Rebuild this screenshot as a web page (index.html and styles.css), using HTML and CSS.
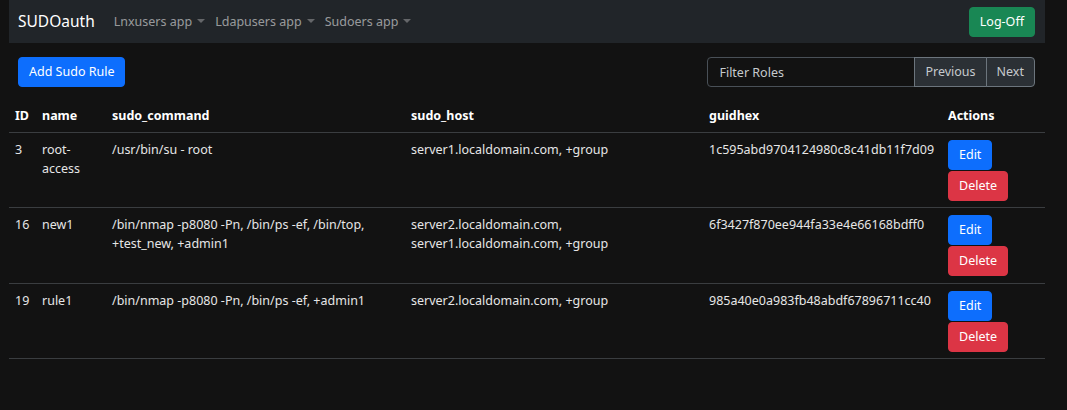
FILE: index.html
```html
<!DOCTYPE html>
<html lang="en">
<head>
<meta charset="utf-8">
<title>SUDOauth</title>
<link rel="stylesheet" href="styles.css">
</head>
<body>
<div class="page">
  <nav class="navbar">
    <a class="brand" href="#">SUDOauth</a>
    <ul class="nav-links">
      <li class="dropdown">Lnxusers app</li>
      <li class="dropdown">Ldapusers app</li>
      <li class="dropdown">Sudoers app</li>
    </ul>
    <button class="btn btn-success">Log-Off</button>
  </nav>

  <div class="toolbar">
    <button class="btn btn-primary">Add Sudo Rule</button>
    <div class="search-group">
      <input class="filter" type="text" placeholder="Filter Roles">
      <button class="btn btn-page">Previous</button>
      <button class="btn btn-page btn-last">Next</button>
    </div>
  </div>

  <table class="rules">
    <colgroup>
      <col class="c-id"><col class="c-name"><col class="c-cmd"><col class="c-host"><col class="c-guid"><col class="c-act">
    </colgroup>
    <thead>
      <tr><th>ID</th><th>name</th><th>sudo_command</th><th>sudo_host</th><th>guidhex</th><th>Actions</th></tr>
    </thead>
    <tbody>
      <tr>
        <td>3</td><td>root-<br>access</td><td>/usr/bin/su - root</td><td>server1.localdomain.com, +group</td><td>1c595abd9704124980c8c41db11f7d09</td>
        <td class="actions"><button class="btn btn-primary">Edit</button><button class="btn btn-danger">Delete</button></td>
      </tr>
      <tr>
        <td>16</td><td>new1</td><td>/bin/nmap -p8080 -Pn, /bin/ps -ef, /bin/top, +test_new, +admin1</td><td>server2.localdomain.com, server1.localdomain.com, +group</td><td>6f3427f870ee944fa33e4e66168bdff0</td>
        <td class="actions"><button class="btn btn-primary">Edit</button><button class="btn btn-danger">Delete</button></td>
      </tr>
      <tr>
        <td>19</td><td>rule1</td><td>/bin/nmap -p8080 -Pn, /bin/ps -ef, +admin1</td><td>server2.localdomain.com, +group</td><td>985a40e0a983fb48abdf67896711cc40</td>
        <td class="actions"><button class="btn btn-primary">Edit</button><button class="btn btn-danger">Delete</button></td>
      </tr>
    </tbody>
  </table>
</div>
</body>
</html>
```

FILE: styles.css
```css
* { box-sizing: border-box; }

html, body {
  margin: 0;
  background: #121212;
  color: #dee2e6;
  font-family: "Noto Sans", "Open Sans", sans-serif;
  font-size: 12.5px;
  line-height: 19.5px;
}

.page {
  width: 1036px;
  margin-left: 9px;
}

.navbar {
  display: flex;
  align-items: center;
  height: 43px;
  background: #212529;
  padding: 0 10px 0 9px;
}

.brand {
  color: #fff;
  text-decoration: none;
  font-size: 15.5px;
  margin-right: 14px;
}

.nav-links {
  display: flex;
  list-style: none;
  margin: 0;
  padding: 0;
  flex: 1;
}

.dropdown {
  color: rgba(255, 255, 255, 0.55);
  padding: 0 5px;
}

.dropdown::after {
  content: "";
  display: inline-block;
  margin-left: 5px;
  vertical-align: 3px;
  border-top: 4px solid rgba(255, 255, 255, 0.3);
  border-left: 4px solid transparent;
  border-right: 4px solid transparent;
}

.btn {
  font-family: inherit;
  font-size: 12.5px;
  line-height: 18px;
  padding: 5px 10px;
  border: 1px solid transparent;
  border-radius: 4px;
  color: #fff;
  cursor: pointer;
}

.btn-success { background: #198754; border-color: #198754; }
.btn-primary { background: #0d6efd; border-color: #0d6efd; }
.btn-danger  { background: #dc3545; border-color: #dc3545; }

.toolbar {
  display: flex;
  justify-content: space-between;
  align-items: center;
  padding: 14px 10px 0 9px;
}

.toolbar .btn-primary { height: 30px; }

.search-group {
  display: flex;
  height: 30px;
}

.filter {
  width: 208px;
  height: 30px;
  background: #121212;
  border: 1px solid #495057;
  border-radius: 4px 0 0 4px;
  padding: 4px 11px;
  font-family: inherit;
  font-size: 12.5px;
  color: #dee2e6;
}

.filter::placeholder { color: #c6cacd; }

.btn-page {
  height: 30px;
  background: #2b3035;
  border: 1px solid #6c757d;
  border-radius: 0;
  color: #c6cacd;
  padding: 5px 10px;
  margin-left: -1px;
}

.btn-last { border-radius: 0 4px 4px 0; }

.rules {
  width: 1036px;
  table-layout: fixed;
  border-collapse: collapse;
  margin-top: 9px;
}

.c-id   { width: 27px; }
.c-name { width: 70px; }
.c-cmd  { width: 299px; }
.c-host { width: 298px; }
.c-guid { width: 239px; }
.c-act  { width: 103px; }

.rules th, .rules td {
  text-align: left;
  vertical-align: top;
  padding: 7px 6px 8px;
  border-bottom: 1px solid #3a3d40;
}

.rules th {
  color: #fff;
  font-weight: 700;
  padding-top: 10px;
  padding-bottom: 6px;
}

.rules td { color: #e6e6e6; }

.rules td.actions { padding-bottom: 5px; }

.rules tbody tr:nth-child(2) td.actions { padding-bottom: 6px; }

.actions .btn {
  display: block;
  height: 30px;
  margin-bottom: 1px;
}
```
